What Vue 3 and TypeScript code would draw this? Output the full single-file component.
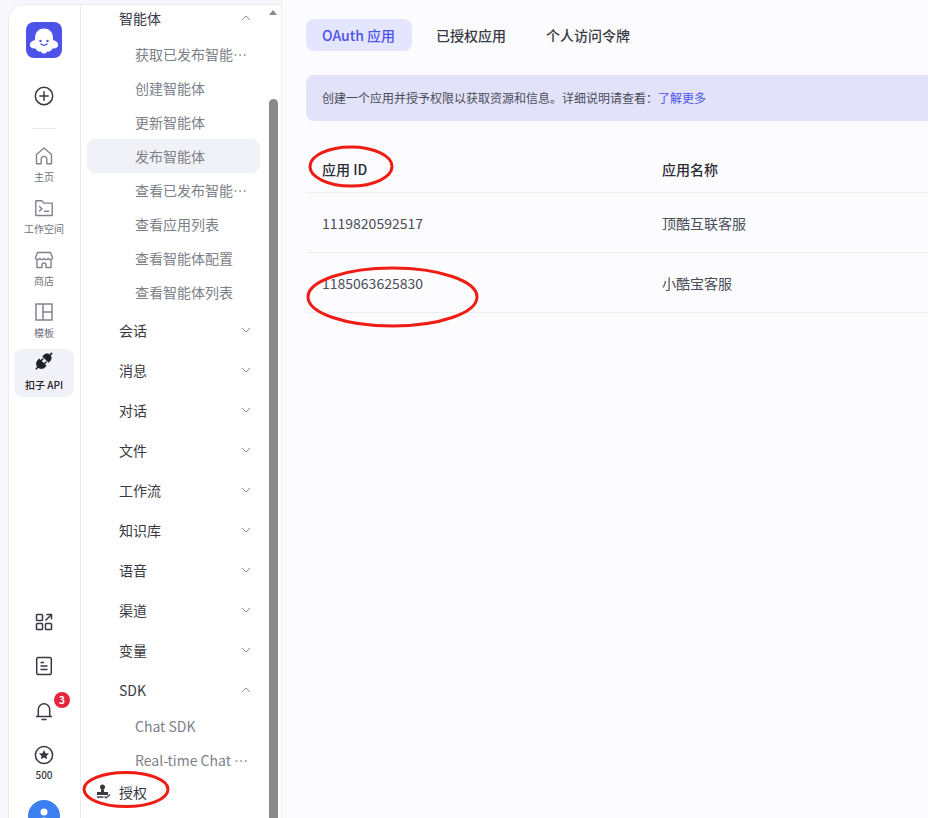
<template>
  <div class="page">
    <aside class="sideCard">
      <div class="rail">
        <div class="logo">
          <svg viewBox="0 0 36 36" width="36" height="36">
            <path d="M18 6.500C12 6.500 9 11 9 16v2c-3 .5-5.200 2.500-5.200 5 0 2.500 2.700 4 5.700 3.500 1 2.500 3.500 3.500 5.500 3 1 2.800 5 2.800 6 0 2 .5 4.500-.5 5.500-3 3 .5 5.700-1 5.700-3.500 0-2.500-2.200-4.500-5.200-5v-2c0-5-3-9.500-9-9.500z" fill="#fff" />
            <circle cx="14.500" cy="19" r="1.200" fill="#4d53e8" />
            <circle cx="21.500" cy="19" r="1.200" fill="#4d53e8" />
            <path d="M15 22c1.500 1.700 4.500 1.700 6 0" fill="none" stroke="#4d53e8" stroke-width="1.300" stroke-linecap="round" />
          </svg>
        </div>
        <svg class="plus" viewBox="0 0 20 20" width="20" height="20" fill="none" stroke="#383943" stroke-width="1.500">
          <circle cx="10" cy="10" r="8.700" />
          <path d="M10 5.800v8.400M5.800 10h8.400" stroke-linecap="round" />
        </svg>
        <div class="divider"></div>

        <div class="railItem">
          <svg viewBox="0 0 20 20" width="20" height="20" fill="none" stroke="#80828d" stroke-width="1.400" stroke-linejoin="round">
            <path d="M2.500 8.500 10 2l7.500 6.500v9.200h-4.700v-4.500a2.800 2.800 0 0 0-5.600 0v4.500H2.500z" />
          </svg>
          <span>主页</span>
        </div>
        <div class="railItem">
          <svg viewBox="0 0 20 20" width="20" height="20" fill="none" stroke="#80828d" stroke-width="1.400" stroke-linejoin="round">
            <path d="M1.800 2.800h6l2 2.300h8.400v12.400H1.800z" />
            <path d="M5.500 8.500 8 10.700l-2.500 2.200M10.500 13.200h4" stroke-linecap="round" />
          </svg>
          <span>工作空间</span>
        </div>
        <div class="railItem">
          <svg viewBox="0 0 20 20" width="20" height="20" fill="none" stroke="#80828d" stroke-width="1.400" stroke-linejoin="round">
            <path d="M3.500 2.500h13l2 5c0 2.600-3 2.600-4.300.8-1 1.700-3.200 1.700-4.200 0-1 1.700-3.200 1.700-4.200 0C4.500 10.100 1.500 10.100 1.500 7.500z" />
            <path d="M3 10v7.500h5v-2.500a2 2 0 0 1 4 0v2.500h5V10" />
          </svg>
          <span>商店</span>
        </div>
        <div class="railItem">
          <svg viewBox="0 0 20 20" width="20" height="20" fill="none" stroke="#80828d" stroke-width="1.500">
            <rect x="2" y="2" width="16" height="16" />
            <path d="M9 2v16M9 10h9" />
          </svg>
          <span>模板</span>
        </div>
        <div class="railItem active">
          <svg class="plugIcon" viewBox="0 0 20 20" width="20" height="20" fill="#1f2029">
            <g transform="rotate(45 10 8)">
              <rect x="9.200" y="-3.500" width="1.600" height="3" />
              <path d="M5.500 6V3.500C5.500 1 7.500-.8 10-.8s4.500 1.800 4.500 4.300V6z" />
              <rect x="7" y="6.800" width="1.500" height="3" />
              <rect x="11.500" y="6.800" width="1.500" height="3" />
              <path d="M4.800 9.500h10.400V12c0 2.800-2.300 5-5.200 5s-5.200-2.200-5.200-5z" />
              <rect x="9.200" y="16.500" width="1.600" height="3" />
            </g>
          </svg>
          <span>扣子 API</span>
        </div>

        <div class="railBottom">
          <svg viewBox="0 0 20 20" width="20" height="20" fill="none" stroke="#383943" stroke-width="1.500">
            <rect x="2.500" y="2.500" width="6" height="6" rx="0.800" />
            <rect x="2.500" y="11.500" width="6" height="6" rx="0.800" />
            <rect x="11.500" y="11.500" width="6" height="6" rx="0.800" />
            <path d="M11.500 8.500 17.500 2.500M12.500 2.500h5v5" />
          </svg>
          <svg viewBox="0 0 20 20" width="20" height="20" fill="none" stroke="#383943" stroke-width="1.500">
            <rect x="2.700" y="1.500" width="14.600" height="17" rx="1.500" />
            <path d="M6.500 6.500h3.500M6.500 10h7M6.500 13.500h7" />
          </svg>
          <div class="bell">
            <svg viewBox="0 0 20 20" width="20" height="20" fill="none" stroke="#383943" stroke-width="1.500">
              <path d="M2.500 15.500h15M4.300 15.500V8.500a5.700 5.700 0 0 1 11.400 0v7M8 18.500h4" stroke-linecap="round" />
            </svg>
            <span class="badge">3</span>
          </div>
          <div class="credit">
            <svg viewBox="0 0 20 20" width="20" height="20">
              <circle cx="10" cy="10" r="8.600" fill="none" stroke="#383943" stroke-width="1.500" />
              <path d="m10 5 1.500 3.200 3.500.4-2.600 2.300.7 3.400L10 12.600l-3.100 1.700.7-3.400L5 8.600l3.500-.4z" fill="#383943" />
            </svg>
            <span>500</span>
          </div>
          <div class="avatar">
            <svg viewBox="0 0 32 32" width="32" height="32" fill="#fff">
              <circle cx="16" cy="12" r="3.500" />
              <path d="M9.500 24c0-4 3-6.500 6.500-6.500s6.500 2.500 6.500 6.500z" />
            </svg>
          </div>
        </div>
      </div>

      <nav class="docNav">
        <div class="docList">
          <template v-for="group in navGroups" :key="group.title">
            <div class="groupRow">
              <span>{{ group.title }}</span>
              <svg viewBox="0 0 12 12" width="12" height="12" fill="none" stroke="#8a8c96" stroke-width="1" :class="{ open: group.items.length }">
                <path d="m2 4 4 4 4-4" />
              </svg>
            </div>
            <div v-if="group.items.length" class="subList">
              <div v-for="item in group.items" :key="item" class="subRow" :class="{ current: item === '发布智能体' }">
                <span>{{ item }}</span>
              </div>
            </div>
          </template>
          <div class="authRow">
            <svg viewBox="0 0 16 16" width="16" height="16" fill="#383943">
              <circle cx="7.500" cy="3" r="2.500" />
              <path d="M6.300 4.500h2.400l.4 3.500h3.900v3H2V8h3.900z" />
              <path d="M2 12.300h6.500v1.500H2z" />
              <path d="m9.500 12.500 1.500 1.500 4-3.500" fill="none" stroke="#383943" stroke-width="1.200" />
            </svg>
            <span>授权</span>
          </div>
        </div>
        <div class="scrollbar">
          <i class="arrow"></i>
          <i class="thumb"></i>
        </div>
      </nav>
    </aside>

    <main class="content">
      <div class="tabs">
        <div v-for="(tab, i) in tabs" :key="tab" class="tab" :class="{ selected: i === 0 }">{{ tab }}</div>
      </div>
      <div class="notice">
        创建一个应用并授予权限以获取资源和信息。详细说明请查看：<a>了解更多</a>
      </div>
      <div class="appTable">
        <div class="tableRow head">
          <div class="colId">应用 ID</div>
          <div>应用名称</div>
        </div>
        <div v-for="app in apps" :key="app.id" class="tableRow">
          <div class="colId">{{ app.id }}</div>
          <div>{{ app.name }}</div>
        </div>
      </div>
    </main>

    <!-- red marks drawn over the screenshot -->
    <svg class="marks" viewBox="0 0 928 818" width="928" height="818" fill="none" stroke="#ee1c14" stroke-width="3">
      <ellipse cx="351" cy="166.500" rx="41" ry="19.500" />
      <ellipse cx="392.500" cy="297" rx="84.500" ry="29" />
      <ellipse cx="126" cy="789.500" rx="42" ry="17" />
    </svg>
  </div>
</template>

<script setup lang="ts">
interface NavGroup {
  title: string;
  items: string[];
}

const agentItems = [
  '获取已发布智能体列表',
  '创建智能体',
  '更新智能体',
  '发布智能体',
  '查看已发布智能体列表',
  '查看应用列表',
  '查看智能体配置',
  '查看智能体列表',
];

const navGroups: NavGroup[] = [
  { title: '智能体', items: agentItems },
  { title: '会话', items: [] },
  { title: '消息', items: [] },
  { title: '对话', items: [] },
  { title: '文件', items: [] },
  { title: '工作流', items: [] },
  { title: '知识库', items: [] },
  { title: '语音', items: [] },
  { title: '渠道', items: [] },
  { title: '变量', items: [] },
  { title: 'SDK', items: ['Chat SDK', 'Real-time Chat SDK 文档'] },
];

const tabs = ['OAuth 应用', '已授权应用', '个人访问令牌'];

const apps = [
  { id: '1119820592517', name: '顶酷互联客服' },
  { id: '1185063625830', name: '小酷宝客服' },
];
</script>

<style>
html,
body {
  margin: 0;
  overflow: hidden;
  background: #f8f8fc;
}
</style>

<style scoped>
.page {
  position: relative;
  display: flex;
  width: 928px;
  height: 818px;
  overflow: hidden;
  background: #f8f8fc;
  font-family: "Noto Sans CJK SC", "Noto Sans", sans-serif;
  color: #1f2029;
}

.sideCard {
  display: flex;
  flex: none;
  width: 274px;
  height: 814px;
  margin: 4px 0 0 8px;
  background: #fff;
  border: 1px solid #ebecf1;
  border-bottom: 0;
  border-radius: 16px 0 0 0;
  box-sizing: border-box;
  overflow: hidden;
}

.rail {
  display: flex;
  flex: none;
  flex-direction: column;
  align-items: center;
  width: 72px;
  box-sizing: border-box;
  padding: 17px 1px 0 0;
  border-right: 1px solid #ebecf1;
}

.rail > * {
  flex: none;
}

.logo {
  width: 36px;
  height: 36px;
  border-radius: 8px;
  background: #4d53e8;
}

.logo svg,
.plus {
  display: block;
}

.plus {
  margin-top: 28px;
}

.divider {
  width: 24px;
  height: 1px;
  margin: 22px 0 7px;
  background: #e8e9ee;
}

.railItem {
  display: flex;
  flex-direction: column;
  align-items: center;
  width: 60px;
  height: 52px;
  padding-top: 10px;
  box-sizing: border-box;
  font-size: 10px;
  line-height: 14px;
  color: #6f717c;
}

.railItem span {
  margin-top: 4px;
}

.railItem.active {
  height: 48px;
  margin-top: 5px;
  padding-top: 6px;
  border-radius: 8px;
  background: #f1f2f7;
  color: #1f2029;
  font-weight: 500;
}

.railItem.active span {
  margin-top: 3px;
}

.plugIcon {
  overflow: visible;
  margin-top: -2px;
  margin-bottom: 2px;
}

.railBottom {
  display: flex;
  flex-direction: column;
  align-items: center;
  gap: 24px;
  margin-top: 215px;
}

.railBottom svg {
  display: block;
}

.bell {
  position: relative;
  margin-top: 1px;
}

.badge {
  position: absolute;
  top: -9px;
  left: 20px;
  width: 16px;
  height: 16px;
  border-radius: 50%;
  background: #e5263f;
  color: #fff;
  font-size: 10px;
  font-weight: 700;
  line-height: 16px;
  text-align: center;
}

.credit {
  display: flex;
  flex-direction: column;
  align-items: center;
  gap: 3px;
  font-size: 10px;
  line-height: 14px;
  font-weight: 500;
  color: #383943;
}

.avatar {
  width: 32px;
  height: 32px;
  margin-top: -6px;
  border-radius: 50%;
  background: #3b7ff0;
}

.docNav {
  position: relative;
  flex: 1;
  min-width: 0;
  overflow: hidden;
}

.docList {
  width: 173px;
  margin: -7px 0 0 6px;
}

.groupRow {
  display: flex;
  align-items: center;
  justify-content: space-between;
  height: 40px;
  padding: 0 8px 0 32px;
  font-size: 14px;
  color: #383943;
}

.groupRow svg.open {
  transform: rotate(180deg);
}

.subList {
  margin: -1px 0 1px;
}

.subRow {
  height: 34px;
  padding: 0 10px 0 48px;
  border-radius: 8px;
  box-sizing: border-box;
  font-size: 14px;
  line-height: 34px;
  color: #7d7f89;
  white-space: nowrap;
}

.subRow span {
  display: block;
  overflow: hidden;
  text-overflow: ellipsis;
}

.subRow.current {
  background: #f1f2f7;
}

.authRow {
  display: flex;
  align-items: center;
  gap: 8px;
  height: 28px;
  padding-left: 8px;
  font-size: 14px;
  color: #383943;
}

.scrollbar {
  position: absolute;
  top: 0;
  right: 2px;
  bottom: 0;
  width: 10px;
}

.arrow {
  position: absolute;
  top: 5px;
  left: 0;
  width: 0;
  height: 0;
  border-left: 4.5px solid transparent;
  border-right: 4.5px solid transparent;
  border-bottom: 5px solid #8a8a8a;
}

.thumb {
  position: absolute;
  top: 94px;
  bottom: 0;
  left: 0;
  width: 9px;
  border-radius: 5px 5px 0 0;
  background: #8a8a8a;
}

.content {
  flex: 1;
  min-width: 0;
  padding: 19px 0 0 24px;
  background: #fcfcff;
}

.tabs {
  display: flex;
  gap: 8px;
}

.tab {
  height: 32px;
  padding: 0 16px;
  border-radius: 8px;
  font-size: 14px;
  font-weight: 500;
  line-height: 32px;
  color: #383943;
}

.tab.selected {
  padding-right: 17px;
  background: #e4e5ff;
  color: #4d53e8;
}

.notice {
  height: 46px;
  margin-top: 24px;
  padding-left: 16px;
  border-radius: 8px 0 0 8px;
  background: #e2e3fb;
  font-size: 12px;
  line-height: 46px;
  color: #4a4c58;
}

.notice a {
  color: #4d53e8;
}

.tableRow {
  display: flex;
  align-items: center;
  height: 60px;
  padding-left: 16px;
  border-bottom: 1px solid #ecedf2;
  box-sizing: border-box;
  font-size: 14px;
  color: #4a4c58;
}

.tableRow.head {
  height: 72px;
  padding-top: 24px;
  font-weight: 500;
  color: #2b2c35;
}

.colId {
  flex: none;
  width: 340px;
}

.marks {
  position: absolute;
  top: 0;
  left: 0;
  pointer-events: none;
}
</style>
